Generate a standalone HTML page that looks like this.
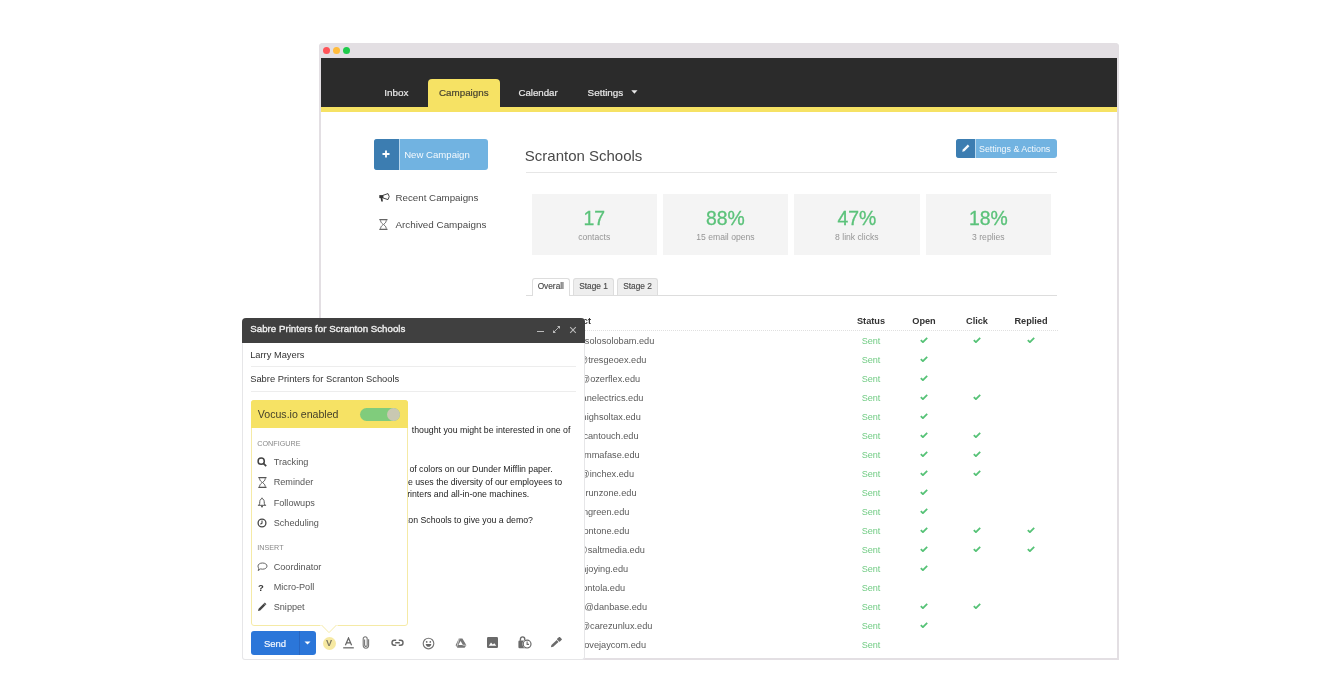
<!DOCTYPE html>
<html><head><meta charset="utf-8"><style>
html,body{margin:0;padding:0;background:#fff;width:1344px;height:678px;overflow:hidden;position:relative;font-family:"Liberation Sans", sans-serif;}
.t{position:absolute;white-space:nowrap;}
#w{position:absolute;left:0;top:0;width:1344px;height:678px;will-change:transform;}
</style></head><body><div id="w">
<div style="position:absolute;left:319px;top:43px;width:800px;height:617px;background:#fff;border:2px solid #E3DFE3;border-top:0;box-sizing:border-box;border-radius:4px 4px 0 0;"></div>
<div style="position:absolute;left:319px;top:43px;width:800px;height:15px;background:#E3DFE3;border-radius:4px 4px 0 0;"></div>
<div style="position:absolute;left:323.2px;top:47px;width:7.2px;height:7.2px;background:#FF5358;border-radius:50%;"></div>
<div style="position:absolute;left:333.09999999999997px;top:47px;width:7.2px;height:7.2px;background:#FFBB3B;border-radius:50%;"></div>
<div style="position:absolute;left:343.0px;top:47px;width:7.2px;height:7.2px;background:#1FCB4B;border-radius:50%;"></div>
<div style="position:absolute;left:321px;top:58px;width:796px;height:49px;background:#2B2B2B;"></div>
<div style="position:absolute;left:321px;top:107px;width:796px;height:5px;background:#F6E264;"></div>
<div style="position:absolute;left:428px;top:78.5px;width:72px;height:30px;background:#F6E264;border-radius:4px 4px 0 0;"></div>
<div class="t" style="left:384.30px;top:87.52px;font-size:9.9px;line-height:9.9px;color:#E8E8E8;font-weight:400;-webkit-text-stroke:0.2px #E8E8E8;">Inbox</div>
<div class="t" style="left:439.00px;top:87.60px;font-size:9.8px;line-height:9.8px;color:#4A4530;font-weight:400;-webkit-text-stroke:0.2px #4A4530;">Campaigns</div>
<div class="t" style="left:518.40px;top:87.69px;font-size:9.7px;line-height:9.7px;color:#E8E8E8;font-weight:400;-webkit-text-stroke:0.2px #E8E8E8;">Calendar</div>
<div class="t" style="left:587.60px;top:87.52px;font-size:9.9px;line-height:9.9px;color:#E8E8E8;font-weight:400;-webkit-text-stroke:0.2px #E8E8E8;">Settings</div>
<svg style="position:absolute;left:630.5px;top:89.5px" width="7" height="4"><path d="M0.3 0.3H6.5L3.4 3.8Z" fill="#E8E8E8"/></svg>
<div style="position:absolute;left:374px;top:139px;width:113.5px;height:30.5px;background:#71B3E1;border-radius:3px;"></div>
<div style="position:absolute;left:374px;top:139px;width:24.5px;height:30.5px;background:#3C7DB1;border-radius:3px 0 0 3px;"></div>
<div style="position:absolute;left:398.5px;top:139px;width:0.8px;height:30.5px;background:#B8D8EF;"></div>
<svg style="position:absolute;left:381.5px;top:150px" width="8" height="8"><path d="M4 0.5V7.5M0.5 4H7.5" stroke="#fff" stroke-width="1.8"/></svg>
<div class="t" style="left:404.20px;top:149.87px;font-size:9.6px;line-height:9.6px;color:#F4F9FD;font-weight:400;">New Campaign</div>
<div class="t" style="left:395.50px;top:192.75px;font-size:9.75px;line-height:9.75px;color:#4A4A4A;font-weight:400;">Recent Campaigns</div>
<div class="t" style="left:395.50px;top:219.66px;font-size:9.85px;line-height:9.85px;color:#4A4A4A;font-weight:400;">Archived Campaigns</div>
<svg style="position:absolute;left:378.5px;top:193px" width="11" height="10" viewBox="0 0 11 10"><path d="M3.8 2.4L9 0.6L10.2 3.6L9 6.6L3.8 4.9Z" fill="none" stroke="#333" stroke-width="0.9" stroke-linejoin="round"/><path d="M0.3 2.1H4.2V5.1H0.3Z" fill="#333"/><path d="M1.6 5L2.3 8.6H3.9L3.4 5Z" fill="#333"/></svg>
<svg style="position:absolute;left:378.5px;top:219px" width="9" height="11" viewBox="0 0 9 11"><path d="M0.3 0.7H8.5M0.3 10.3H8.5" stroke="#666" stroke-width="1.2"/><path d="M1.5 1.2C1.5 4.3 4.2 4.8 4.2 5.5C4.2 6.2 1.5 6.7 1.5 9.8M7.3 1.2C7.3 4.3 4.6 4.8 4.6 5.5C4.6 6.2 7.3 6.7 7.3 9.8" fill="none" stroke="#666" stroke-width="0.9"/></svg>
<div class="t" style="left:524.80px;top:148.30px;font-size:15px;line-height:15px;color:#4A4A4A;font-weight:400;">Scranton Schools</div>
<div style="position:absolute;left:525.5px;top:172px;width:531.5px;height:1px;background:#E6E6E6;"></div>
<div style="position:absolute;left:956px;top:139px;width:101px;height:18.5px;background:#71B3E1;border-radius:3px;"></div>
<div style="position:absolute;left:956px;top:139px;width:19px;height:18.5px;background:#3C7DB1;border-radius:3px 0 0 3px;"></div>
<div style="position:absolute;left:975px;top:139px;width:0.8px;height:18.5px;background:#B8D8EF;"></div>
<svg style="position:absolute;left:960.5px;top:143px" width="10" height="10" viewBox="0 0 10 10"><path d="M1.2 8.8L1.8 6.6L6.8 1.6L8.4 3.2L3.4 8.2Z" fill="#F4F9FD"/></svg>
<div class="t" style="left:979.00px;top:144.71px;font-size:8.85px;line-height:8.85px;color:#F4F9FD;font-weight:400;">Settings &amp; Actions</div>
<div style="position:absolute;left:531.5px;top:194.4px;width:125.5px;height:60.5px;background:#F4F4F4;"></div>
<div class="t" style="left:294.25px;width:600px;text-align:center;top:209.08px;font-size:19.4px;line-height:19.4px;color:#5BC27A;font-weight:400;-webkit-text-stroke:0.3px #5BC27A;">17</div>
<div class="t" style="left:294.25px;width:600px;text-align:center;top:233.02px;font-size:8.6px;line-height:8.6px;color:#959595;font-weight:400;">contacts</div>
<div style="position:absolute;left:662.7px;top:194.4px;width:125.5px;height:60.5px;background:#F4F4F4;"></div>
<div class="t" style="left:425.45px;width:600px;text-align:center;top:209.08px;font-size:19.4px;line-height:19.4px;color:#5BC27A;font-weight:400;-webkit-text-stroke:0.3px #5BC27A;">88%</div>
<div class="t" style="left:425.45px;width:600px;text-align:center;top:233.02px;font-size:8.6px;line-height:8.6px;color:#959595;font-weight:400;">15 email opens</div>
<div style="position:absolute;left:794.1px;top:194.4px;width:125.5px;height:60.5px;background:#F4F4F4;"></div>
<div class="t" style="left:556.85px;width:600px;text-align:center;top:209.08px;font-size:19.4px;line-height:19.4px;color:#5BC27A;font-weight:400;-webkit-text-stroke:0.3px #5BC27A;">47%</div>
<div class="t" style="left:556.85px;width:600px;text-align:center;top:233.02px;font-size:8.6px;line-height:8.6px;color:#959595;font-weight:400;">8 link clicks</div>
<div style="position:absolute;left:925.6px;top:194.4px;width:125.5px;height:60.5px;background:#F4F4F4;"></div>
<div class="t" style="left:688.35px;width:600px;text-align:center;top:209.08px;font-size:19.4px;line-height:19.4px;color:#5BC27A;font-weight:400;-webkit-text-stroke:0.3px #5BC27A;">18%</div>
<div class="t" style="left:688.35px;width:600px;text-align:center;top:233.02px;font-size:8.6px;line-height:8.6px;color:#959595;font-weight:400;">3 replies</div>
<div style="position:absolute;left:525.5px;top:295px;width:531.5px;height:1px;background:#DDDDDD;"></div>
<div style="position:absolute;left:531.7px;top:277.6px;width:38.2px;height:18.4px;background:#fff;border:1px solid #DDD;border-bottom:0;border-radius:3px 3px 0 0;box-sizing:border-box;"></div>
<div style="position:absolute;left:573.2px;top:277.6px;width:40.5px;height:17.4px;background:#EEEEEE;border:1px solid #DDD;border-bottom:0;border-radius:3px 3px 0 0;box-sizing:border-box;"></div>
<div style="position:absolute;left:617.3px;top:277.6px;width:40.5px;height:17.4px;background:#EEEEEE;border:1px solid #DDD;border-bottom:0;border-radius:3px 3px 0 0;box-sizing:border-box;"></div>
<div class="t" style="left:250.80px;width:600px;text-align:center;top:282.17px;font-size:8.3px;line-height:8.3px;color:#4A4A4A;font-weight:400;-webkit-text-stroke:0.15px #4A4A4A;">Overall</div>
<div class="t" style="left:293.50px;width:600px;text-align:center;top:282.17px;font-size:8.3px;line-height:8.3px;color:#4A4A4A;font-weight:400;-webkit-text-stroke:0.15px #4A4A4A;">Stage 1</div>
<div class="t" style="left:337.50px;width:600px;text-align:center;top:282.17px;font-size:8.3px;line-height:8.3px;color:#4A4A4A;font-weight:400;-webkit-text-stroke:0.15px #4A4A4A;">Stage 2</div>
<div class="t" style="left:-9.00px;width:600px;text-align:right;top:316.61px;font-size:9.2px;line-height:9.2px;color:#333;font-weight:700;">Contact</div>
<div class="t" style="left:571.00px;width:600px;text-align:center;top:316.61px;font-size:9.2px;line-height:9.2px;color:#333;font-weight:700;">Status</div>
<div class="t" style="left:624.00px;width:600px;text-align:center;top:316.61px;font-size:9.2px;line-height:9.2px;color:#333;font-weight:700;">Open</div>
<div class="t" style="left:677.00px;width:600px;text-align:center;top:316.61px;font-size:9.2px;line-height:9.2px;color:#333;font-weight:700;">Click</div>
<div class="t" style="left:731.00px;width:600px;text-align:center;top:316.61px;font-size:9.2px;line-height:9.2px;color:#333;font-weight:700;">Replied</div>
<div style="position:absolute;left:525.5px;top:330px;width:532px;height:0;border-top:1px dotted #E0E0E0;"></div>
<div class="t" style="left:54.30px;width:600px;text-align:right;top:336.71px;font-size:9.2px;line-height:9.2px;color:#5A5A5A;font-weight:400;">contact@solosolobam.edu</div>
<div class="t" style="left:571.00px;width:600px;text-align:center;top:336.70px;font-size:9.1px;line-height:9.1px;color:#70CB83;font-weight:400;">Sent</div>
<div style="position:absolute;left:920px;top:337.09999999999997px;width:8px;height:6px;line-height:0"><svg width="8" height="6" viewBox="0 0 8 6"><path d="M0.8 3.2L2.9 5.2L7.2 0.9" fill="none" stroke="#55C276" stroke-width="1.75"/></svg></div>
<div style="position:absolute;left:973px;top:337.09999999999997px;width:8px;height:6px;line-height:0"><svg width="8" height="6" viewBox="0 0 8 6"><path d="M0.8 3.2L2.9 5.2L7.2 0.9" fill="none" stroke="#55C276" stroke-width="1.75"/></svg></div>
<div style="position:absolute;left:1027px;top:337.09999999999997px;width:8px;height:6px;line-height:0"><svg width="8" height="6" viewBox="0 0 8 6"><path d="M0.8 3.2L2.9 5.2L7.2 0.9" fill="none" stroke="#55C276" stroke-width="1.75"/></svg></div>
<div class="t" style="left:46.40px;width:600px;text-align:right;top:355.71px;font-size:9.2px;line-height:9.2px;color:#5A5A5A;font-weight:400;">contact@tresgeoex.edu</div>
<div class="t" style="left:571.00px;width:600px;text-align:center;top:355.70px;font-size:9.1px;line-height:9.1px;color:#70CB83;font-weight:400;">Sent</div>
<div style="position:absolute;left:920px;top:356.09999999999997px;width:8px;height:6px;line-height:0"><svg width="8" height="6" viewBox="0 0 8 6"><path d="M0.8 3.2L2.9 5.2L7.2 0.9" fill="none" stroke="#55C276" stroke-width="1.75"/></svg></div>
<div class="t" style="left:40.20px;width:600px;text-align:right;top:374.71px;font-size:9.2px;line-height:9.2px;color:#5A5A5A;font-weight:400;">contact@ozerflex.edu</div>
<div class="t" style="left:571.00px;width:600px;text-align:center;top:374.70px;font-size:9.1px;line-height:9.1px;color:#70CB83;font-weight:400;">Sent</div>
<div style="position:absolute;left:920px;top:375.09999999999997px;width:8px;height:6px;line-height:0"><svg width="8" height="6" viewBox="0 0 8 6"><path d="M0.8 3.2L2.9 5.2L7.2 0.9" fill="none" stroke="#55C276" stroke-width="1.75"/></svg></div>
<div class="t" style="left:43.40px;width:600px;text-align:right;top:393.71px;font-size:9.2px;line-height:9.2px;color:#5A5A5A;font-weight:400;">contact@anelectrics.edu</div>
<div class="t" style="left:571.00px;width:600px;text-align:center;top:393.70px;font-size:9.1px;line-height:9.1px;color:#70CB83;font-weight:400;">Sent</div>
<div style="position:absolute;left:920px;top:394.09999999999997px;width:8px;height:6px;line-height:0"><svg width="8" height="6" viewBox="0 0 8 6"><path d="M0.8 3.2L2.9 5.2L7.2 0.9" fill="none" stroke="#55C276" stroke-width="1.75"/></svg></div>
<div style="position:absolute;left:973px;top:394.09999999999997px;width:8px;height:6px;line-height:0"><svg width="8" height="6" viewBox="0 0 8 6"><path d="M0.8 3.2L2.9 5.2L7.2 0.9" fill="none" stroke="#55C276" stroke-width="1.75"/></svg></div>
<div class="t" style="left:40.80px;width:600px;text-align:right;top:412.71px;font-size:9.2px;line-height:9.2px;color:#5A5A5A;font-weight:400;">contact@highsoltax.edu</div>
<div class="t" style="left:571.00px;width:600px;text-align:center;top:412.70px;font-size:9.1px;line-height:9.1px;color:#70CB83;font-weight:400;">Sent</div>
<div style="position:absolute;left:920px;top:413.09999999999997px;width:8px;height:6px;line-height:0"><svg width="8" height="6" viewBox="0 0 8 6"><path d="M0.8 3.2L2.9 5.2L7.2 0.9" fill="none" stroke="#55C276" stroke-width="1.75"/></svg></div>
<div class="t" style="left:38.60px;width:600px;text-align:right;top:431.71px;font-size:9.2px;line-height:9.2px;color:#5A5A5A;font-weight:400;">contact@cantouch.edu</div>
<div class="t" style="left:571.00px;width:600px;text-align:center;top:431.70px;font-size:9.1px;line-height:9.1px;color:#70CB83;font-weight:400;">Sent</div>
<div style="position:absolute;left:920px;top:432.09999999999997px;width:8px;height:6px;line-height:0"><svg width="8" height="6" viewBox="0 0 8 6"><path d="M0.8 3.2L2.9 5.2L7.2 0.9" fill="none" stroke="#55C276" stroke-width="1.75"/></svg></div>
<div style="position:absolute;left:973px;top:432.09999999999997px;width:8px;height:6px;line-height:0"><svg width="8" height="6" viewBox="0 0 8 6"><path d="M0.8 3.2L2.9 5.2L7.2 0.9" fill="none" stroke="#55C276" stroke-width="1.75"/></svg></div>
<div class="t" style="left:39.70px;width:600px;text-align:right;top:450.71px;font-size:9.2px;line-height:9.2px;color:#5A5A5A;font-weight:400;">contact@mmafase.edu</div>
<div class="t" style="left:571.00px;width:600px;text-align:center;top:450.70px;font-size:9.1px;line-height:9.1px;color:#70CB83;font-weight:400;">Sent</div>
<div style="position:absolute;left:920px;top:451.09999999999997px;width:8px;height:6px;line-height:0"><svg width="8" height="6" viewBox="0 0 8 6"><path d="M0.8 3.2L2.9 5.2L7.2 0.9" fill="none" stroke="#55C276" stroke-width="1.75"/></svg></div>
<div style="position:absolute;left:973px;top:451.09999999999997px;width:8px;height:6px;line-height:0"><svg width="8" height="6" viewBox="0 0 8 6"><path d="M0.8 3.2L2.9 5.2L7.2 0.9" fill="none" stroke="#55C276" stroke-width="1.75"/></svg></div>
<div class="t" style="left:34.10px;width:600px;text-align:right;top:469.71px;font-size:9.2px;line-height:9.2px;color:#5A5A5A;font-weight:400;">contact@inchex.edu</div>
<div class="t" style="left:571.00px;width:600px;text-align:center;top:469.70px;font-size:9.1px;line-height:9.1px;color:#70CB83;font-weight:400;">Sent</div>
<div style="position:absolute;left:920px;top:470.09999999999997px;width:8px;height:6px;line-height:0"><svg width="8" height="6" viewBox="0 0 8 6"><path d="M0.8 3.2L2.9 5.2L7.2 0.9" fill="none" stroke="#55C276" stroke-width="1.75"/></svg></div>
<div style="position:absolute;left:973px;top:470.09999999999997px;width:8px;height:6px;line-height:0"><svg width="8" height="6" viewBox="0 0 8 6"><path d="M0.8 3.2L2.9 5.2L7.2 0.9" fill="none" stroke="#55C276" stroke-width="1.75"/></svg></div>
<div class="t" style="left:36.50px;width:600px;text-align:right;top:488.71px;font-size:9.2px;line-height:9.2px;color:#5A5A5A;font-weight:400;">contact@runzone.edu</div>
<div class="t" style="left:571.00px;width:600px;text-align:center;top:488.70px;font-size:9.1px;line-height:9.1px;color:#70CB83;font-weight:400;">Sent</div>
<div style="position:absolute;left:920px;top:489.09999999999997px;width:8px;height:6px;line-height:0"><svg width="8" height="6" viewBox="0 0 8 6"><path d="M0.8 3.2L2.9 5.2L7.2 0.9" fill="none" stroke="#55C276" stroke-width="1.75"/></svg></div>
<div class="t" style="left:29.40px;width:600px;text-align:right;top:507.71px;font-size:9.2px;line-height:9.2px;color:#5A5A5A;font-weight:400;">contact@ngreen.edu</div>
<div class="t" style="left:571.00px;width:600px;text-align:center;top:507.70px;font-size:9.1px;line-height:9.1px;color:#70CB83;font-weight:400;">Sent</div>
<div style="position:absolute;left:920px;top:508.1px;width:8px;height:6px;line-height:0"><svg width="8" height="6" viewBox="0 0 8 6"><path d="M0.8 3.2L2.9 5.2L7.2 0.9" fill="none" stroke="#55C276" stroke-width="1.75"/></svg></div>
<div class="t" style="left:29.40px;width:600px;text-align:right;top:526.71px;font-size:9.2px;line-height:9.2px;color:#5A5A5A;font-weight:400;">contact@ontone.edu</div>
<div class="t" style="left:571.00px;width:600px;text-align:center;top:526.70px;font-size:9.1px;line-height:9.1px;color:#70CB83;font-weight:400;">Sent</div>
<div style="position:absolute;left:920px;top:527.1px;width:8px;height:6px;line-height:0"><svg width="8" height="6" viewBox="0 0 8 6"><path d="M0.8 3.2L2.9 5.2L7.2 0.9" fill="none" stroke="#55C276" stroke-width="1.75"/></svg></div>
<div style="position:absolute;left:973px;top:527.1px;width:8px;height:6px;line-height:0"><svg width="8" height="6" viewBox="0 0 8 6"><path d="M0.8 3.2L2.9 5.2L7.2 0.9" fill="none" stroke="#55C276" stroke-width="1.75"/></svg></div>
<div style="position:absolute;left:1027px;top:527.1px;width:8px;height:6px;line-height:0"><svg width="8" height="6" viewBox="0 0 8 6"><path d="M0.8 3.2L2.9 5.2L7.2 0.9" fill="none" stroke="#55C276" stroke-width="1.75"/></svg></div>
<div class="t" style="left:44.90px;width:600px;text-align:right;top:545.71px;font-size:9.2px;line-height:9.2px;color:#5A5A5A;font-weight:400;">contact@saltmedia.edu</div>
<div class="t" style="left:571.00px;width:600px;text-align:center;top:545.70px;font-size:9.1px;line-height:9.1px;color:#70CB83;font-weight:400;">Sent</div>
<div style="position:absolute;left:920px;top:546.1px;width:8px;height:6px;line-height:0"><svg width="8" height="6" viewBox="0 0 8 6"><path d="M0.8 3.2L2.9 5.2L7.2 0.9" fill="none" stroke="#55C276" stroke-width="1.75"/></svg></div>
<div style="position:absolute;left:973px;top:546.1px;width:8px;height:6px;line-height:0"><svg width="8" height="6" viewBox="0 0 8 6"><path d="M0.8 3.2L2.9 5.2L7.2 0.9" fill="none" stroke="#55C276" stroke-width="1.75"/></svg></div>
<div style="position:absolute;left:1027px;top:546.1px;width:8px;height:6px;line-height:0"><svg width="8" height="6" viewBox="0 0 8 6"><path d="M0.8 3.2L2.9 5.2L7.2 0.9" fill="none" stroke="#55C276" stroke-width="1.75"/></svg></div>
<div class="t" style="left:28.20px;width:600px;text-align:right;top:564.71px;font-size:9.2px;line-height:9.2px;color:#5A5A5A;font-weight:400;">contact@njoying.edu</div>
<div class="t" style="left:571.00px;width:600px;text-align:center;top:564.70px;font-size:9.1px;line-height:9.1px;color:#70CB83;font-weight:400;">Sent</div>
<div style="position:absolute;left:920px;top:565.1px;width:8px;height:6px;line-height:0"><svg width="8" height="6" viewBox="0 0 8 6"><path d="M0.8 3.2L2.9 5.2L7.2 0.9" fill="none" stroke="#55C276" stroke-width="1.75"/></svg></div>
<div class="t" style="left:25.20px;width:600px;text-align:right;top:583.71px;font-size:9.2px;line-height:9.2px;color:#5A5A5A;font-weight:400;">contact@ontola.edu</div>
<div class="t" style="left:571.00px;width:600px;text-align:center;top:583.70px;font-size:9.1px;line-height:9.1px;color:#70CB83;font-weight:400;">Sent</div>
<div class="t" style="left:47.00px;width:600px;text-align:right;top:602.71px;font-size:9.2px;line-height:9.2px;color:#5A5A5A;font-weight:400;">contact@danbase.edu</div>
<div class="t" style="left:571.00px;width:600px;text-align:center;top:602.70px;font-size:9.1px;line-height:9.1px;color:#70CB83;font-weight:400;">Sent</div>
<div style="position:absolute;left:920px;top:603.1px;width:8px;height:6px;line-height:0"><svg width="8" height="6" viewBox="0 0 8 6"><path d="M0.8 3.2L2.9 5.2L7.2 0.9" fill="none" stroke="#55C276" stroke-width="1.75"/></svg></div>
<div style="position:absolute;left:973px;top:603.1px;width:8px;height:6px;line-height:0"><svg width="8" height="6" viewBox="0 0 8 6"><path d="M0.8 3.2L2.9 5.2L7.2 0.9" fill="none" stroke="#55C276" stroke-width="1.75"/></svg></div>
<div class="t" style="left:52.40px;width:600px;text-align:right;top:621.71px;font-size:9.2px;line-height:9.2px;color:#5A5A5A;font-weight:400;">contact@carezunlux.edu</div>
<div class="t" style="left:571.00px;width:600px;text-align:center;top:621.70px;font-size:9.1px;line-height:9.1px;color:#70CB83;font-weight:400;">Sent</div>
<div style="position:absolute;left:920px;top:622.1px;width:8px;height:6px;line-height:0"><svg width="8" height="6" viewBox="0 0 8 6"><path d="M0.8 3.2L2.9 5.2L7.2 0.9" fill="none" stroke="#55C276" stroke-width="1.75"/></svg></div>
<div class="t" style="left:46.00px;width:600px;text-align:right;top:640.71px;font-size:9.2px;line-height:9.2px;color:#5A5A5A;font-weight:400;">contact@ovejaycom.edu</div>
<div class="t" style="left:571.00px;width:600px;text-align:center;top:640.70px;font-size:9.1px;line-height:9.1px;color:#70CB83;font-weight:400;">Sent</div>
<div style="position:absolute;left:242px;top:318px;width:343px;height:341.5px;background:#fff;border:1px solid #E6E6E8;border-top:0;box-sizing:border-box;border-radius:4px 4px 3px 3px;"></div>
<div style="position:absolute;left:242px;top:318px;width:343px;height:24.5px;background:#404040;border-radius:4px 4px 0 0;"></div>
<div class="t" style="left:250.30px;top:324.17px;font-size:9.72px;line-height:9.72px;color:#F0F0F0;font-weight:400;-webkit-text-stroke:0.35px #F0F0F0;">Sabre Printers for Scranton Schools</div>
<div style="position:absolute;left:537px;top:331.2px;width:7px;height:1.3px;background:#BBBBBB;"></div>
<svg style="position:absolute;left:552px;top:325px" width="9" height="9" viewBox="0 0 9 9"><path d="M1.8 7.2L7.2 1.8" stroke="#BBBBBB" stroke-width="0.9"/><path d="M5 1H8V4Z M1 5V8H4Z" fill="#BBBBBB"/></svg>
<svg style="position:absolute;left:569px;top:325.5px" width="8" height="8" viewBox="0 0 8 8"><path d="M1.2 1.2L6.8 6.8M6.8 1.2L1.2 6.8" stroke="#BBBBBB" stroke-width="1.05"/></svg>
<div class="t" style="left:250.20px;top:350.83px;font-size:9.3px;line-height:9.3px;color:#333;font-weight:400;">Larry Mayers</div>
<div style="position:absolute;left:250.5px;top:366px;width:325px;height:1px;background:#EDEDED;"></div>
<div class="t" style="left:250.20px;top:375.09px;font-size:9.35px;line-height:9.35px;color:#333;font-weight:400;">Sabre Printers for Scranton Schools</div>
<div style="position:absolute;left:250.5px;top:391px;width:325px;height:1px;background:#EDEDED;"></div>
<div class="t" style="left:-29.60px;width:600px;text-align:right;top:426.38px;font-size:8.76px;line-height:8.76px;color:#222;font-weight:400;"> thought you might be interested in one of</div>
<div class="t" style="left:-47.30px;width:600px;text-align:right;top:464.78px;font-size:8.76px;line-height:8.76px;color:#222;font-weight:400;"> of colors on our Dunder Mifflin paper.</div>
<div class="t" style="left:-37.90px;width:600px;text-align:right;top:477.68px;font-size:8.76px;line-height:8.76px;color:#222;font-weight:400;">our new range uses the diversity of our employees to</div>
<div class="t" style="left:-70.80px;width:600px;text-align:right;top:490.38px;font-size:8.76px;line-height:8.76px;color:#222;font-weight:400;">new line of printers and all-in-one machines.</div>
<div class="t" style="left:-67.10px;width:600px;text-align:right;top:516.08px;font-size:8.76px;line-height:8.76px;color:#222;font-weight:400;">Can I swing by Scranton Schools to give you a demo?</div>
<div style="position:absolute;left:250.5px;top:400px;width:157px;height:226px;background:#fff;border:1px solid #F5EAA6;box-sizing:border-box;border-radius:3px;"></div>
<div style="position:absolute;left:250.5px;top:400px;width:157px;height:27.7px;background:#F6E264;border-radius:3px 3px 0 0;"></div>
<div class="t" style="left:257.80px;top:408.83px;font-size:10.6px;line-height:10.6px;color:#45412A;font-weight:400;">Vocus.io enabled</div>
<div style="position:absolute;left:359.5px;top:407.7px;width:40px;height:13.3px;background:#80CC7C;border-radius:7px;"></div>
<div style="position:absolute;left:386.5px;top:407.7px;width:13.3px;height:13.3px;background:#C9C8B2;border-radius:50%;"></div>
<div class="t" style="left:257.30px;top:439.61px;font-size:7.2px;line-height:7.2px;color:#888;font-weight:400;">CONFIGURE</div>
<div class="t" style="left:273.70px;top:458.35px;font-size:9.15px;line-height:9.15px;color:#555;font-weight:400;">Tracking</div>
<div class="t" style="left:273.70px;top:478.35px;font-size:9.15px;line-height:9.15px;color:#555;font-weight:400;">Reminder</div>
<div class="t" style="left:273.70px;top:498.55px;font-size:9.15px;line-height:9.15px;color:#555;font-weight:400;">Followups</div>
<div class="t" style="left:273.70px;top:518.75px;font-size:9.15px;line-height:9.15px;color:#555;font-weight:400;">Scheduling</div>
<div class="t" style="left:257.30px;top:544.41px;font-size:7.2px;line-height:7.2px;color:#888;font-weight:400;">INSERT</div>
<div class="t" style="left:273.70px;top:562.75px;font-size:9.15px;line-height:9.15px;color:#555;font-weight:400;">Coordinator</div>
<div class="t" style="left:273.70px;top:583.05px;font-size:9.15px;line-height:9.15px;color:#555;font-weight:400;">Micro-Poll</div>
<div class="t" style="left:273.70px;top:602.95px;font-size:9.15px;line-height:9.15px;color:#555;font-weight:400;">Snippet</div>
<svg style="position:absolute;left:320px;top:624px" width="18" height="10" viewBox="0 0 18 10"><path d="M0.5 1.5H17.5" stroke="#fff" stroke-width="2"/><path d="M1.5 1L9 8.6L16.5 1" fill="#fff" stroke="#F5EAA6" stroke-width="1"/></svg>
<svg style="position:absolute;left:257px;top:457px" width="10" height="10" viewBox="0 0 10 10"><circle cx="4.2" cy="4.2" r="3.1" fill="none" stroke="#444" stroke-width="1.5"/><path d="M6.4 6.4L9.2 9.2" stroke="#444" stroke-width="1.7"/></svg>
<svg style="position:absolute;left:257.5px;top:476.5px" width="9" height="11" viewBox="0 0 9 11"><path d="M0.3 0.7H8.5M0.3 10.3H8.5" stroke="#555" stroke-width="1.2"/><path d="M1.5 1.2C1.5 4.3 4.2 4.8 4.2 5.5C4.2 6.2 1.5 6.7 1.5 9.8M7.3 1.2C7.3 4.3 4.6 4.8 4.6 5.5C4.6 6.2 7.3 6.7 7.3 9.8" fill="none" stroke="#555" stroke-width="0.9"/></svg>
<svg style="position:absolute;left:257px;top:497px" width="10" height="11" viewBox="0 0 10 11"><path d="M2 8.2C2.7 7.2 2.8 6.2 2.8 4.7C2.8 2.9 3.8 1.7 5 1.7C6.2 1.7 7.2 2.9 7.2 4.7C7.2 6.2 7.3 7.2 8 8.2M0.9 8.3H9.1" fill="none" stroke="#555" stroke-width="1"/><circle cx="5" cy="1.2" r="0.6" fill="#555"/><circle cx="5" cy="9.4" r="1" fill="#555"/></svg>
<svg style="position:absolute;left:257px;top:517.5px" width="10" height="10" viewBox="0 0 10 10"><circle cx="5" cy="5" r="3.9" fill="none" stroke="#444" stroke-width="1.3"/><path d="M5 2.5V5.1L3.4 6.3" fill="none" stroke="#444" stroke-width="1.1"/></svg>
<svg style="position:absolute;left:257px;top:562px" width="11" height="10" viewBox="0 0 11 10"><path d="M5.5 1C8.2 1 10 2.4 10 4.1C10 5.8 8.2 7.2 5.5 7.2C4.8 7.2 4.2 7.1 3.6 6.9L1.2 8.6L1.8 6.2C1.2 5.6 1 4.9 1 4.1C1 2.4 2.8 1 5.5 1Z" fill="none" stroke="#555" stroke-width="0.9"/></svg>
<div class="t" style="left:257.90px;top:582.56px;font-size:9.5px;line-height:9.5px;color:#333;font-weight:700;">?</div>
<svg style="position:absolute;left:256.5px;top:602px" width="10" height="10" viewBox="0 0 10 10"><path d="M1 9L1.6 6.8L6.8 1.6L8.4 3.2L3.2 8.4Z" fill="#444"/><path d="M7.4 1L9 2.6" stroke="#444" stroke-width="1.2"/></svg>
<div style="position:absolute;left:250.6px;top:631px;width:65.4px;height:24.2px;background:#2B76D9;border-radius:3px;"></div>
<div style="position:absolute;left:299.2px;top:631px;width:0.9px;height:24.2px;background:#2766C2;"></div>
<div class="t" style="left:-25.00px;width:600px;text-align:center;top:638.56px;font-size:9.5px;line-height:9.5px;color:#F4F8FE;font-weight:400;-webkit-text-stroke:0.2px #F4F8FE;">Send</div>
<svg style="position:absolute;left:304.3px;top:640.8px" width="7" height="4"><path d="M0.5 0.5H6.5L3.5 3.5Z" fill="#fff"/></svg>
<div style="position:absolute;left:322.5px;top:637px;width:13px;height:13px;background:#F6E9A2;border-radius:50%;"></div>
<div class="t" style="left:29.00px;width:600px;text-align:center;top:638.81px;font-size:9.2px;line-height:9.2px;color:#7E7A62;font-weight:700;">V</div>
<svg style="position:absolute;left:343px;top:636.5px" width="11" height="12" viewBox="0 0 11 12"><path d="M2.4 8.3L5.5 1L8.6 8.3M3.6 5.9H7.4" fill="none" stroke="#666" stroke-width="1.25"/><path d="M0.2 10.8H10.8" stroke="#777" stroke-width="1.4"/></svg>
<svg style="position:absolute;left:361.5px;top:636px" width="8" height="13" viewBox="0 0 8 13"><path d="M6.6 3.2V9.3C6.6 11 5.4 12.2 3.9 12.2C2.4 12.2 1.2 11 1.2 9.3V2.8C1.2 1.6 2.1 0.7 3.2 0.7C4.3 0.7 5.2 1.6 5.2 2.8V9C5.2 9.8 4.6 10.4 3.9 10.4C3.2 10.4 2.6 9.8 2.6 9V3.6" fill="none" stroke="#777" stroke-width="1.1"/></svg>
<svg style="position:absolute;left:390.5px;top:638.5px" width="13" height="8" viewBox="0 0 13 8"><path d="M5.2 1.3H3.3C2 1.3 1 2.3 1 3.8C1 5.3 2 6.3 3.3 6.3H5.2M7.8 1.3H9.7C11 1.3 12 2.3 12 3.8C12 5.3 11 6.3 9.7 6.3H7.8M4.2 3.8H8.8" fill="none" stroke="#666" stroke-width="1.4"/></svg>
<svg style="position:absolute;left:422px;top:636.5px" width="13" height="13" viewBox="0 0 13 13"><circle cx="6.5" cy="6.5" r="5.3" fill="none" stroke="#777" stroke-width="1.15"/><circle cx="4.7" cy="4.9" r="0.85" fill="#666"/><circle cx="8.3" cy="4.9" r="0.85" fill="#666"/><path d="M3.7 7H9.3C9.1 8.9 7.9 9.8 6.5 9.8C5.1 9.8 3.9 8.9 3.7 7Z" fill="#666"/></svg>
<svg style="position:absolute;left:455px;top:637.5px" width="12" height="10" viewBox="0 0 12 10"><path fill-rule="evenodd" d="M3.8 0.4H7.4L11.4 7.2L9.6 9.7H2.4L0.6 7.2Z M5.6 2.9L3.4 6.9H7.9Z" fill="#777"/><path d="M4.2 0.6L1.9 8.6M7.6 7.2H11.2" stroke="#fff" stroke-width="0.6"/></svg>
<svg style="position:absolute;left:487px;top:637px" width="11" height="11" viewBox="0 0 11 11"><rect x="0" y="0" width="11" height="11" rx="1.2" fill="#6A6A6A"/><path d="M1.8 8.8L4 5.6L5.8 7.6L7.3 6.2L9.3 8.8Z" fill="#fff"/></svg>
<svg style="position:absolute;left:517.5px;top:636px" width="14" height="13" viewBox="0 0 14 13"><rect x="0.4" y="4.6" width="8.4" height="7.6" rx="1.2" fill="#6A6A6A"/><path d="M2.4 4.8V3.4C2.4 1.8 3.4 0.9 4.6 0.9C5.8 0.9 6.8 1.8 6.8 3.4V4.8" fill="none" stroke="#6A6A6A" stroke-width="1.4"/><circle cx="9.1" cy="8.1" r="4.7" fill="#fff"/><circle cx="9.1" cy="8.1" r="3.9" fill="none" stroke="#6A6A6A" stroke-width="1.2"/><path d="M9.1 5.6V8.4H11" fill="none" stroke="#6A6A6A" stroke-width="1.1"/></svg>
<svg style="position:absolute;left:550px;top:637px" width="12" height="11" viewBox="0 0 12 11"><g transform="translate(6 5.5) rotate(-43)"><path d="M-7 0L-5 -1.3H2.2V1.3H-5Z" fill="#6A6A6A"/><rect x="2.8" y="-1.9" width="3.8" height="3.8" rx="0.5" fill="#6A6A6A"/></g></svg>
</div></body></html>
